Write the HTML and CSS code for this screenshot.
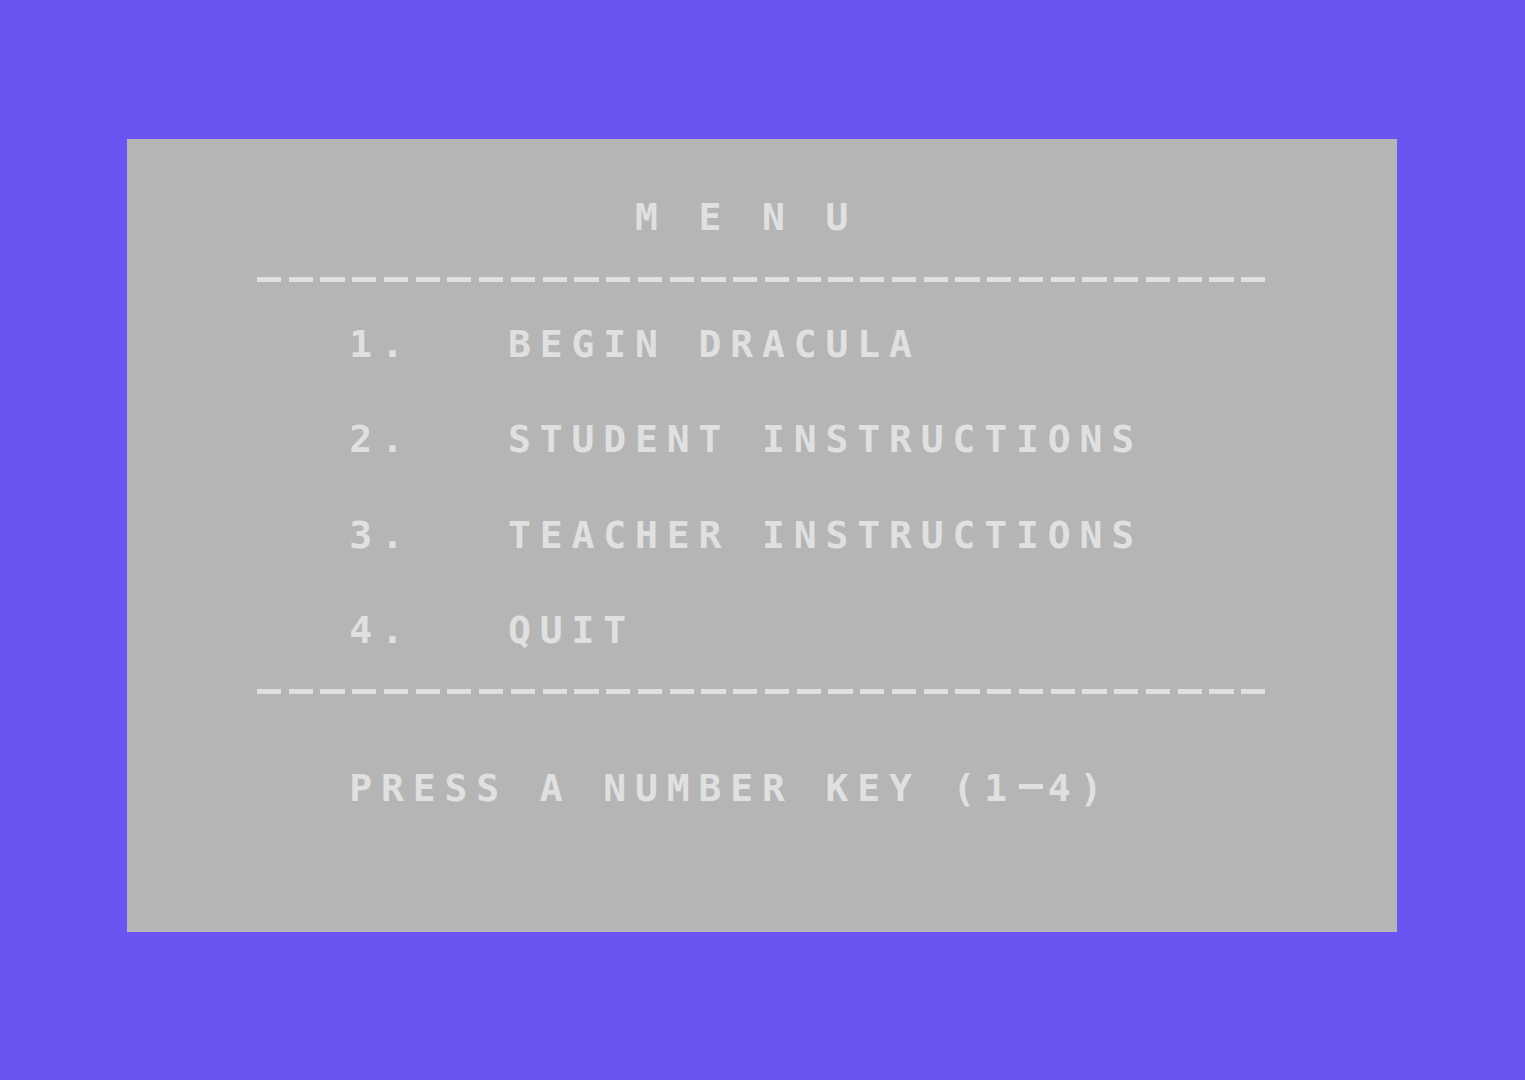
FILE: index.html
```html
<html lang="en">
<head>
    <meta charset="UTF-8">
    <meta name="viewport" content="width=device-width, initial-scale=1.0">
    <title>Dracula - Menu</title>
    <link rel="stylesheet" href="styles.css">
</head>
<body>
    <div class="screen">
        <div class="line"></div>
        <div class="line"></div>
        <div class="line">                M E N U</div>
        <div class="line"></div>
        <div class="line">    <span class="rule">--------------------------------</span></div>
        <div class="line"></div>
        <div class="line">       1.   BEGIN DRACULA</div>
        <div class="line"></div>
        <div class="line"></div>
        <div class="line">       2.   STUDENT INSTRUCTIONS</div>
        <div class="line"></div>
        <div class="line"></div>
        <div class="line">       3.   TEACHER INSTRUCTIONS</div>
        <div class="line"></div>
        <div class="line"></div>
        <div class="line">       4.   QUIT</div>
        <div class="line"></div>
        <div class="line">    <span class="rule">--------------------------------</span></div>
        <div class="line"></div>
        <div class="line"></div>
        <div class="line">       PRESS A NUMBER KEY (1<span class="rule">-</span>4)</div>
    </div>
</body>
</html>
```

FILE: styles.css
```css
* {
    margin: 0;
    padding: 0;
    box-sizing: border-box;
}
body {
    background: #6a55f2;
    width: 1525px;
    height: 1080px;
    padding: 139px 128px 148px 127px;
    overflow: hidden;
}
/* 40 x 25 character screen */
.screen {
    background: #b5b5b5;
    width: 1270px;
    height: 793px;
    color: #e0e0e0;
    font-family: 'DejaVu Sans Mono', monospace;
    font-weight: bold;
    font-size: 38px;
    letter-spacing: 8.87px;
}
.line {
    height: 31.72px;
    line-height: 31.72px;
    white-space: pre;
}
/* wide C64-style dash, one per character cell */
.rule {
    display: inline-block;
    vertical-align: top;
    height: 31.72px;
    color: transparent;
    background: repeating-linear-gradient(to right, #e0e0e0 0, #e0e0e0 24px, transparent 24px, transparent 31.75px) 3px 11px / 100% 5px no-repeat;
}
```
